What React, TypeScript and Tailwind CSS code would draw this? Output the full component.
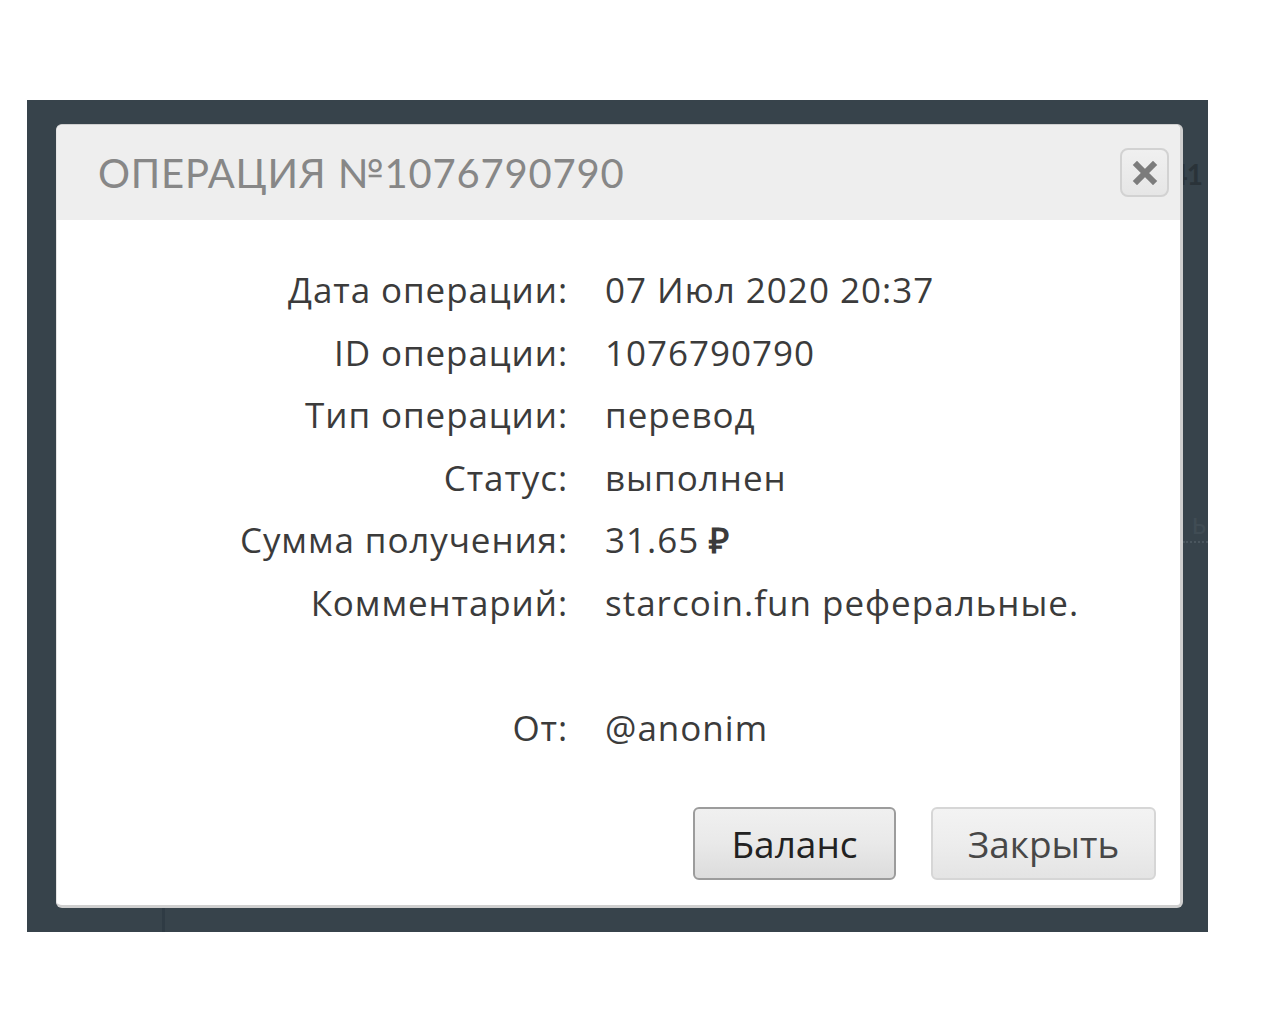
import React from 'react';

const rows: { label: string; value: React.ReactNode }[] = [
  { label: 'Дата операции:', value: '07 Июл 2020 20:37' },
  { label: 'ID операции:', value: '1076790790' },
  { label: 'Тип операции:', value: 'перевод' },
  { label: 'Статус:', value: 'выполнен' },
  {
    label: 'Сумма получения:',
    value: (
      <>
        31.65 <span className="font-bold">₽</span>
      </>
    ),
  },
  { label: 'Комментарий:', value: 'starcoin.fun реферальные.' },
  { label: '', value: '' },
  { label: 'От:', value: '@anonim' },
];

const CloseIcon = () => (
  <svg width="26" height="24" viewBox="0 0 26 24" className="blur-[0.4px]">
    <path d="M5 4 L21 20 M21 4 L5 20" stroke="#7c7c7c" strokeWidth="6" strokeLinecap="square" />
  </svg>
);

export default function App() {
  return (
    <div className="min-h-[1024px] bg-white pt-[100px] pl-[27px]" style={{ fontFamily: 'Lato, "Noto Sans", sans-serif' }}>
      <div className="flex w-[1181px] flex-col bg-[#37434b]">
        <div className="flex pt-[24px]">
          <div className="w-[29px] shrink-0" />

          {/* Modal */}
          <div className="flex h-[784px] w-[1127px] shrink-0 flex-col overflow-hidden rounded-[6px] border border-r-[3px] border-b-[3px] border-[#cfcfcf] border-l-[#e4e4e4] bg-white">
            <div className="flex h-[95px] shrink-0 items-start justify-between bg-[#eeeeee] pl-[41px] pr-[11px]">
              <h2 className="mt-[28px] text-[40px] leading-[40px] tracking-[0.8px] text-[#878787]" style={{ fontFamily: 'Lato, sans-serif' }}>
                ОПЕРАЦИЯ №1076790790
              </h2>
              <button className="mt-[23px] flex h-[49px] w-[49px] items-center justify-center rounded-[8px] border-2 border-[#d2d2d2] bg-gradient-to-b from-[#f0f0f0] to-[#e6e6e6]">
                <CloseIcon />
              </button>
            </div>

            <div className="flex flex-1 flex-col pt-[39px] text-[#3b3b3b]" style={{ fontFamily: '"Open Sans", Lato, sans-serif' }}>
              <div className="grid grid-cols-[511px_1fr] gap-x-[37px]">
                {rows.map((r, i) => (
                  <React.Fragment key={i}>
                    <div className="text-right text-[35px] leading-[62.5px] tracking-[0.9px]">{r.label}</div>
                    <div className="text-[35px] leading-[62.5px] tracking-[1px]">{r.value || '\u00a0'}</div>
                  </React.Fragment>
                ))}
              </div>

              <div className="mt-auto flex justify-end gap-[35px] pb-[25px] pr-[24px]" style={{ fontFamily: '"Open Sans", sans-serif' }}>
                <button className="h-[73px] w-[203px] rounded-[6px] border-2 border-[#9c9c9c] bg-gradient-to-b from-[#f0f0f0] via-[#e9e9e9] to-[#dcdcdc] text-[37px] text-[#222]">
                  Баланс
                </button>
                <button className="h-[73px] w-[225px] rounded-[6px] border-2 border-[#d6d6d6] bg-gradient-to-b from-[#f3f3f3] via-[#ededed] to-[#e4e4e4] text-[37px] text-[#474747]">
                  Закрыть
                </button>
              </div>
            </div>
          </div>

          {/* peek of the page behind */}
          <div className="flex w-[25px] shrink-0 flex-col overflow-hidden">
            <div className="mt-[30px] flex justify-end pr-[6px]">
              <span className="whitespace-nowrap text-[28px] font-bold leading-[40px] tracking-[-1px] text-[#2a3339]">41</span>
            </div>
            <div className="mt-[310px] flex justify-end pr-[2px]">
              <span className="text-[30px] leading-[36px] text-[#404c54]">ь</span>
            </div>
            <div className="mt-[1px] border-t-2 border-dotted border-[#4a565e]" />
          </div>
        </div>
        <div className="flex h-[24px]">
          <div className="w-[135px]" />
          <div className="w-[3px] bg-[#2f3b44]" />
        </div>
      </div>
    </div>
  );
}
